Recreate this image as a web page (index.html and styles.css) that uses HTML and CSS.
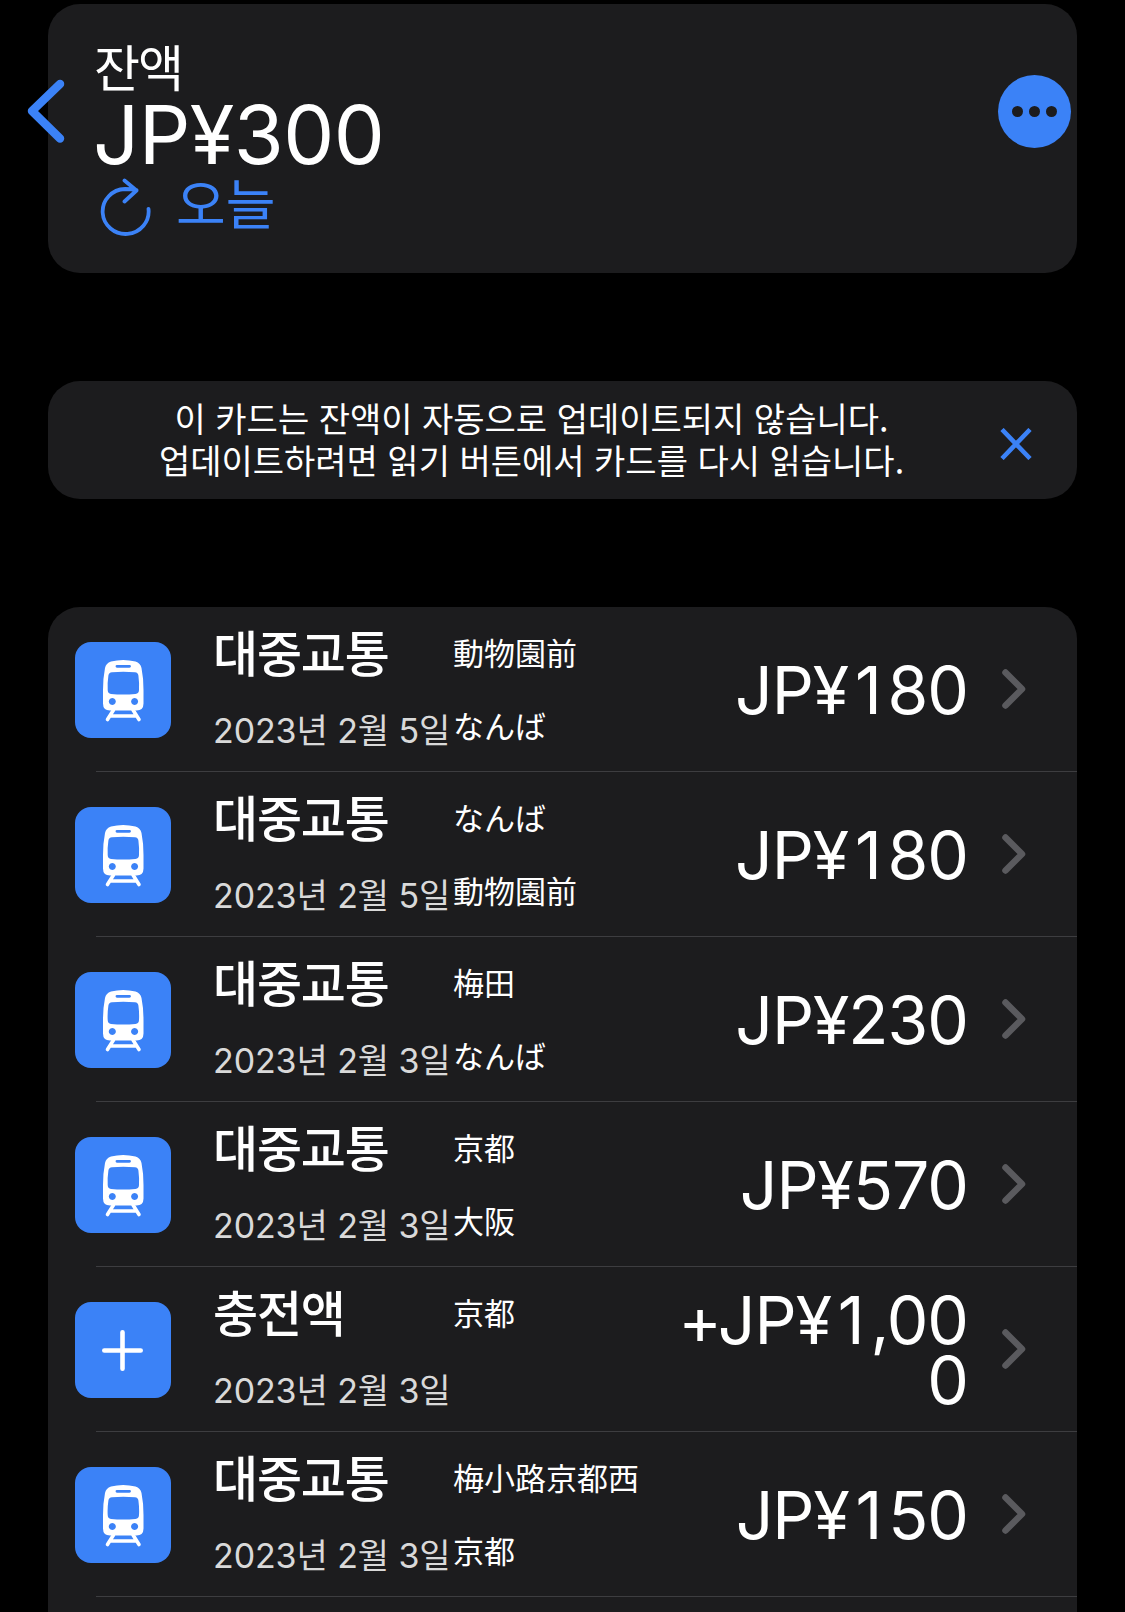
FILE: index.html
```html
<!DOCTYPE html>
<html lang="ko">
  <head>
    <meta charset="UTF-8">
    <meta name="viewport" content="width=device-width, initial-scale=1.0">
    <title>잔액</title>
    <link rel="stylesheet" href="styles.css">
  </head>
  <body>
    <svg class="symbols" width="0" height="0">
      <symbol id="train" viewBox="0 0 96 96">
        <path fill="#fff" fill-rule="evenodd" d="M36 19.500Q48 16.500 60.500 19.500Q65.500 21 66.500 26Q68.500 36 68.500 48V61.500Q68.500 68.500 61.500 68.500H35Q28 68.500 28 61.500V48Q28 36 30 26Q31 21 36 19.500ZM42 22.900a1.400 1.400 0 0 0 0 2.900h12.500a1.400 1.400 0 0 0 0-2.900ZM37 30.200Q48 29.200 60 30.200Q63 30.500 63.400 33.500Q64.400 41 64 48Q64 51.500 60.500 51.900Q48 53.200 36 51.900Q32.700 51.500 32.700 48Q32.300 41 33.400 33.500Q33.800 30.500 37 30.200ZM37.300 56a3.500 3.500 0 1 0 .01 0ZM59.600 56a3.500 3.500 0 1 0 .01 0Z"/>
        <path fill="none" stroke="#fff" stroke-width="3.600" stroke-linecap="round" d="M38.500 68L32.500 77.500M58 68L64 77.500M36 74H60.500"/>
      </symbol>
      <symbol id="plus" viewBox="0 0 96 96">
        <path fill="none" stroke="#fff" stroke-width="4.600" stroke-linecap="round" d="M29.300 48.500H65.700M47.500 30.300V66.700"/>
      </symbol>
      <symbol id="chevron" viewBox="0 0 24 42">
        <path fill="none" stroke="#5a5a5e" stroke-width="6.500" stroke-linecap="round" stroke-linejoin="round" d="M3.500 3.500L20 20L3.500 36.500"/>
      </symbol>
    </svg>

    <button class="back"><svg viewBox="0 0 40 66"><path d="M35 6L7 33L35 60.500"/></svg></button>
    <button class="more"><span></span><span></span><span></span></button>

    <section class="card balance">
      <p class="label">잔액</p>
      <p class="total">JP¥300</p>
      <div class="updated">
        <svg class="refresh" viewBox="0 0 54 60"><path d="M49.500 31A23 22.500 0 1 1 26 11Q32 11 37.500 12M25.500 2.500L37.500 12.500L25.500 23.500"/></svg>
        <span>오늘</span>
      </div>
    </section>

    <section class="card notice">
      <p>이 카드는 잔액이 자동으로 업데이트되지 않습니다.<br>업데이트하려면 읽기 버튼에서 카드를 다시 읽습니다.</p>
      <svg class="close" viewBox="0 0 32 32"><path d="M2 1.500L30 30.500M30 1.500L2 30.500"/></svg>
    </section>

    <section class="card history">
      <div class="row">
        <svg class="icon"><use href="#train"/></svg>
        <div class="info"><h2>대중교통</h2><p>2023년 2월 5일</p></div>
        <div class="stations" lang="ja"><span>動物園前</span><span>なんば</span></div>
        <div class="amount">JP<span class="wide">¥1</span>80</div>
        <svg class="chevron"><use href="#chevron"/></svg>
      </div>
      <div class="row">
        <svg class="icon"><use href="#train"/></svg>
        <div class="info"><h2>대중교통</h2><p>2023년 2월 5일</p></div>
        <div class="stations" lang="ja"><span>なんば</span><span>動物園前</span></div>
        <div class="amount">JP<span class="wide">¥1</span>80</div>
        <svg class="chevron"><use href="#chevron"/></svg>
      </div>
      <div class="row">
        <svg class="icon"><use href="#train"/></svg>
        <div class="info"><h2>대중교통</h2><p>2023년 2월 3일</p></div>
        <div class="stations" lang="ja"><span>梅田</span><span>なんば</span></div>
        <div class="amount">JP¥230</div>
        <svg class="chevron"><use href="#chevron"/></svg>
      </div>
      <div class="row">
        <svg class="icon"><use href="#train"/></svg>
        <div class="info"><h2>대중교통</h2><p>2023년 2월 3일</p></div>
        <div class="stations" lang="ja"><span>京都</span><span>大阪</span></div>
        <div class="amount">JP¥570</div>
        <svg class="chevron"><use href="#chevron"/></svg>
      </div>
      <div class="row">
        <svg class="icon"><use href="#plus"/></svg>
        <div class="info"><h2>충전액</h2><p>2023년 2월 3일</p></div>
        <div class="stations" lang="ja"><span>京都</span></div>
        <div class="amount">+JP<span class="wide">¥1</span>,000</div>
        <svg class="chevron"><use href="#chevron"/></svg>
      </div>
      <div class="row">
        <svg class="icon"><use href="#train"/></svg>
        <div class="info"><h2>대중교통</h2><p>2023년 2월 3일</p></div>
        <div class="stations" lang="ja"><span>梅小路京都西</span><span>京都</span></div>
        <div class="amount">JP<span class="wide">¥1</span>50</div>
        <svg class="chevron"><use href="#chevron"/></svg>
      </div>
    </section>
  </body>
</html>
```
FILE: styles.css
```css
* {
  box-sizing: border-box;
}
body {
  position: relative;
  height: 1612px;
  margin: 0;
  padding: 4px 48px 0;
  overflow: hidden;
  display: flex;
  flex-direction: column;
  gap: 108px;
  background: #000;
  color: #fff;
  font-family: "Noto Sans CJK KR", sans-serif;
}
p, h2 {
  margin: 0;
}
.symbols {
  position: absolute;
}
.card {
  flex: none;
  background: #1c1c1e;
  border-radius: 32px;
}

/* navigation buttons float over the balance card */
.back, .more {
  position: absolute;
  border: 0;
  padding: 0;
}
.back {
  left: 25px;
  top: 78px;
  width: 40px;
  height: 66px;
  background: none;
}
.back path {
  fill: none;
  stroke: #3b82f7;
  stroke-width: 8.5;
  stroke-linecap: round;
  stroke-linejoin: round;
}
.more {
  left: 998px;
  top: 75px;
  width: 73px;
  height: 73px;
  border-radius: 50%;
  background: #3b82f7;
  display: flex;
  align-items: center;
  justify-content: center;
  gap: 6px;
}
.more span {
  width: 11px;
  height: 11px;
  border-radius: 50%;
  background: #1c1c1e;
}

.balance {
  height: 269px;
  padding: 31px 46px 0;
}
.label {
  font-size: 50px;
  line-height: 60px;
  letter-spacing: -2px;
}
.total {
  margin-left: -1px;
  padding-top: 2px;
  font-family: Inter, sans-serif;
  font-size: 81px;
  line-height: 76px;
  letter-spacing: -0.6px;
}
.updated {
  display: flex;
  align-items: flex-start;
  gap: 23px;
  padding-left: 5px;
  color: #3b82f7;
  font-size: 54px;
  line-height: 58px;
}
.refresh {
  width: 54px;
  height: 60px;
  margin-top: 5px;
  fill: none;
  stroke: #3b82f7;
  stroke-width: 3.8;
  stroke-linecap: round;
  stroke-linejoin: round;
}

.notice {
  height: 118px;
  padding: 0 45px 0 0;
  display: flex;
  align-items: center;
}
.notice p {
  flex: 1;
  padding: 0 0 3px 15px;
  text-align: center;
  font-size: 34px;
  line-height: 42px;
  white-space: nowrap;
}
.close {
  width: 32px;
  height: 32px;
  margin-top: 8px;
  stroke: #3b82f7;
  stroke-width: 4.6;
}

.history {
  flex: 1;
  min-height: 0;
  border-radius: 32px 32px 0 0;
}
.row {
  display: flex;
  align-items: center;
  height: 165px;
  padding: 0 51px 0 27px;
  background: linear-gradient(#3d3d40, #3d3d40) no-repeat 48px 100% / 100% 1px;
}
.icon {
  flex: none;
  width: 96px;
  height: 96px;
  border-radius: 16px;
  background: #3b82f7;
}
.info {
  flex: none;
  width: 240px;
  height: 165px;
  margin-left: 42px;
  padding-top: 12px;
  white-space: nowrap;
}
.info h2 {
  font-size: 49px;
  font-weight: 500;
  line-height: 64px;
  letter-spacing: -1.2px;
}
.info p {
  padding-top: 24px;
  color: #d9d9d9;
  font-family: Inter, "Noto Sans CJK KR", sans-serif;
  font-size: 34px;
  line-height: 48px;
  letter-spacing: -0.1px;
}
.stations {
  flex: none;
  width: 180px;
  height: 165px;
  padding-top: 22px;
  font-family: "Noto Sans CJK JP", sans-serif;
  font-size: 31px;
  line-height: 46px;
  white-space: nowrap;
}
.stations span {
  display: block;
  margin-bottom: 27px;
}
.amount {
  flex: none;
  width: 294px;
  margin-left: auto;
  text-align: right;
  font-family: Inter, sans-serif;
  font-size: 66px;
  line-height: 60px;
  letter-spacing: -1px;
  word-break: break-all;
}
/* the narrow 1 takes the same room as the other digits */
.wide {
  letter-spacing: 5.8px;
}
.chevron {
  flex: none;
  width: 24px;
  height: 42px;
  margin-left: 34px;
}
```
